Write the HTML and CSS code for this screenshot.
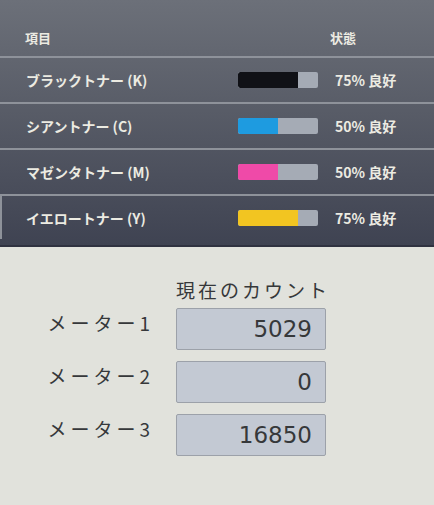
FILE: index.html
```html
<!DOCTYPE html>
<html lang="ja">
<head>
    <meta charset="UTF-8">
    <title>トナー残量 / カウンター</title>
    <link rel="stylesheet" href="styles.css">
</head>
<body>
    <div class="toner-panel">
        <div class="toner-head">
            <span class="col-name">項目</span>
            <span class="col-state">状態</span>
        </div>
        <div class="toner-row">
            <span class="col-name">ブラックトナー (K)</span>
            <span class="bar"><span class="fill fill-k" style="width: 75%"></span></span>
            <span class="col-state">75% 良好</span>
        </div>
        <div class="toner-row">
            <span class="col-name">シアントナー (C)</span>
            <span class="bar"><span class="fill fill-c" style="width: 50%"></span></span>
            <span class="col-state">50% 良好</span>
        </div>
        <div class="toner-row">
            <span class="col-name">マゼンタトナー (M)</span>
            <span class="bar"><span class="fill fill-m" style="width: 50%"></span></span>
            <span class="col-state">50% 良好</span>
        </div>
        <div class="toner-row last">
            <span class="col-name">イエロートナー (Y)</span>
            <span class="bar"><span class="fill fill-y" style="width: 75%"></span></span>
            <span class="col-state">75% 良好</span>
        </div>
    </div>

    <div class="counter-panel">
        <div class="counter-grid">
            <div></div>
            <div class="counter-title">現在のカウント</div>

            <div class="meter-label">メーター1</div>
            <div class="meter-box">5029</div>

            <div class="meter-label">メーター2</div>
            <div class="meter-box">0</div>

            <div class="meter-label">メーター3</div>
            <div class="meter-box">16850</div>
        </div>
    </div>
</body>
</html>
```

FILE: styles.css
```css
body {
    margin: 0;
    width: 434px;
    height: 505px;
    overflow: hidden;
    font-family: "Noto Sans CJK JP", "Noto Sans", sans-serif;
    background-color: #e1e2dc;
}

/* トナー残量 */
.toner-panel {
    height: 247px;
    box-sizing: border-box;
    background: linear-gradient(180deg, #6c7079 0%, #585c67 45%, #3f4352 100%);
    color: #ecebe2;
    border-bottom: 2px solid #2f3240;
}
.toner-head {
    height: 56px;
    box-sizing: border-box;
    display: flex;
    align-items: flex-end;
    padding: 0 0 9px 25px;
    font-size: 13px;
    font-weight: bold;
}
.toner-head .col-name {
    width: 305px;
}
.toner-row {
    height: 46px;
    box-sizing: border-box;
    display: flex;
    align-items: center;
    padding-left: 26px;
    border-top: 2px solid #8e929a;
    font-size: 14px;
    font-weight: bold;
}
.toner-row.last {
    border-left: 2px solid #8e929a;
    padding-left: 24px;
    height: 45px;
}
.toner-row .col-name {
    width: 212px;
}
.bar {
    width: 80px;
    height: 16px;
    border-radius: 2px;
    background-color: #a5abb5;
    overflow: hidden;
    display: flex;
}
.fill {
    height: 100%;
    border-radius: 2px 0 0 2px;
}
.fill-k { background-color: #101116; }
.fill-c { background-color: #1e9be0; }
.fill-m { background-color: #ef4aa8; }
.fill-y { background-color: #f2c521; }
.toner-row .col-state {
    margin-left: 17px;
}

/* カウンター */
.counter-panel {
    padding-top: 30px;
    color: #36383a;
}
.counter-grid {
    display: grid;
    grid-template-columns: 176px 150px;
    row-gap: 11px;
}
.counter-title {
    font-size: 19px;
    letter-spacing: 3px;
    line-height: 26px;
    margin-bottom: -6px;
    white-space: nowrap;
}
.meter-label {
    font-size: 19px;
    letter-spacing: 4px;
    text-align: right;
    padding-right: 22px;
    line-height: 28px;
    padding-top: 1px;
}
.meter-box {
    height: 42px;
    box-sizing: border-box;
    background-color: #c3c9d3;
    border: 1px solid #9ca1a9;
    border-radius: 2px;
    text-align: right;
    padding-right: 13px;
    font-family: "DejaVu Sans", sans-serif;
    font-size: 23px;
    line-height: 40px;
}
```
